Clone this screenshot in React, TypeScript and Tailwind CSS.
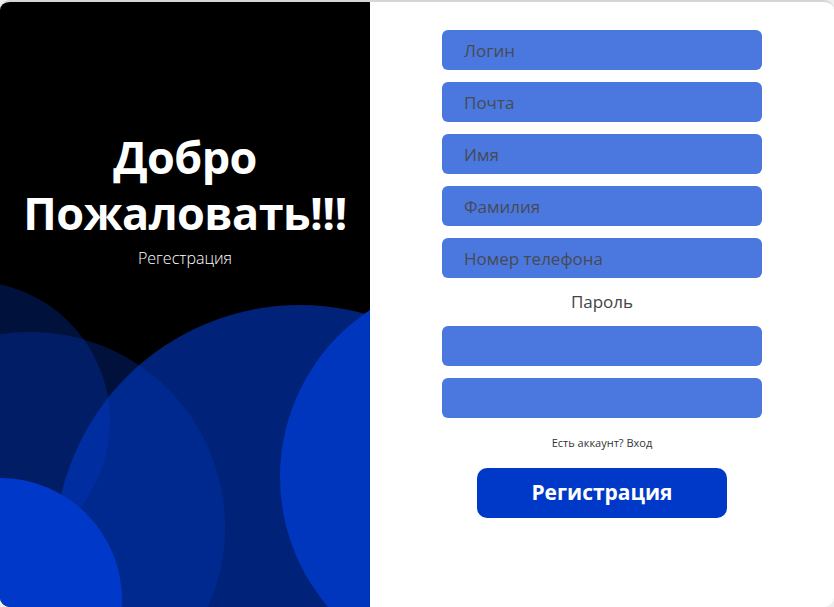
import React from "react";

const fields = ["Логин", "Почта", "Имя", "Фамилия", "Номер телефона"];

const Circle = ({ cls }: { cls: string }) => (
  <div className={`absolute rounded-full ${cls}`} />
);

const App = () => {
  return (
    <div
      className="w-[834px] h-[607px] bg-[#eeeeee]"
      style={{ fontFamily: '"Open Sans", "Noto Sans", sans-serif' }}
    >
      <div className="flex h-full w-full overflow-hidden rounded-[10px] border-t-2 border-[#d6d6d6] bg-white">
        {/* left panel */}
        <div className="relative w-[370px] shrink-0 overflow-hidden bg-black">
          <Circle cls="left-[-170px] top-[279px] w-[280px] h-[280px] bg-[#0038c8]/30" />
          <Circle cls="left-[-165px] top-[330px] w-[390px] h-[390px] bg-[#0038c8]/30" />
          <Circle cls="left-[55px] top-[303px] w-[490px] h-[490px] bg-[#0038c8]/60" />
          <Circle cls="left-[280px] top-[275px] w-[400px] h-[400px] bg-[#0036be]" />
          <Circle cls="left-[-122px] top-[476px] w-[244px] h-[244px] bg-[#0039c9]" />

          <div className="relative flex flex-col items-center pt-[127px] text-white">
            <h1 className="text-center text-[45px] font-bold leading-[56px] tracking-[-0.6px]">
              Добро
              <br />
              Пожаловать!!!
            </h1>
            <p className="mt-[6px] text-[16px] font-light leading-[22px]">Регестрация</p>
          </div>
        </div>

        {/* right panel */}
        <div className="flex flex-1 flex-col items-center pt-[28px]">
          <div className="flex w-[320px] flex-col gap-[12px]">
            {fields.map((f) => (
              <input
                key={f}
                placeholder={f}
                className="h-[40px] w-full rounded-[6px] bg-[#4b78de] px-[22px] text-[17px] text-[#3a3a3a] outline-none placeholder:text-[#474a55]"
              />
            ))}
          </div>
          <p className="mt-[12px] text-[17px] leading-[24px] text-[#444]">Пароль</p>
          <div className="mt-[12px] flex w-[320px] flex-col gap-[12px]">
            <input type="password" className="h-[40px] w-full rounded-[6px] bg-[#4b78de] px-[22px] outline-none" />
            <input type="password" className="h-[40px] w-full rounded-[6px] bg-[#4b78de] px-[22px] outline-none" />
          </div>
          <p className="mt-[17px] text-[11px] leading-[16px] text-[#333]">Есть аккаунт? Вход</p>
          <button className="mt-[17px] h-[50px] w-[250px] rounded-[10px] bg-[#0038c8] text-[21px] font-bold text-white">
            Регистрация
          </button>
        </div>
      </div>
    </div>
  );
};

export default App;
